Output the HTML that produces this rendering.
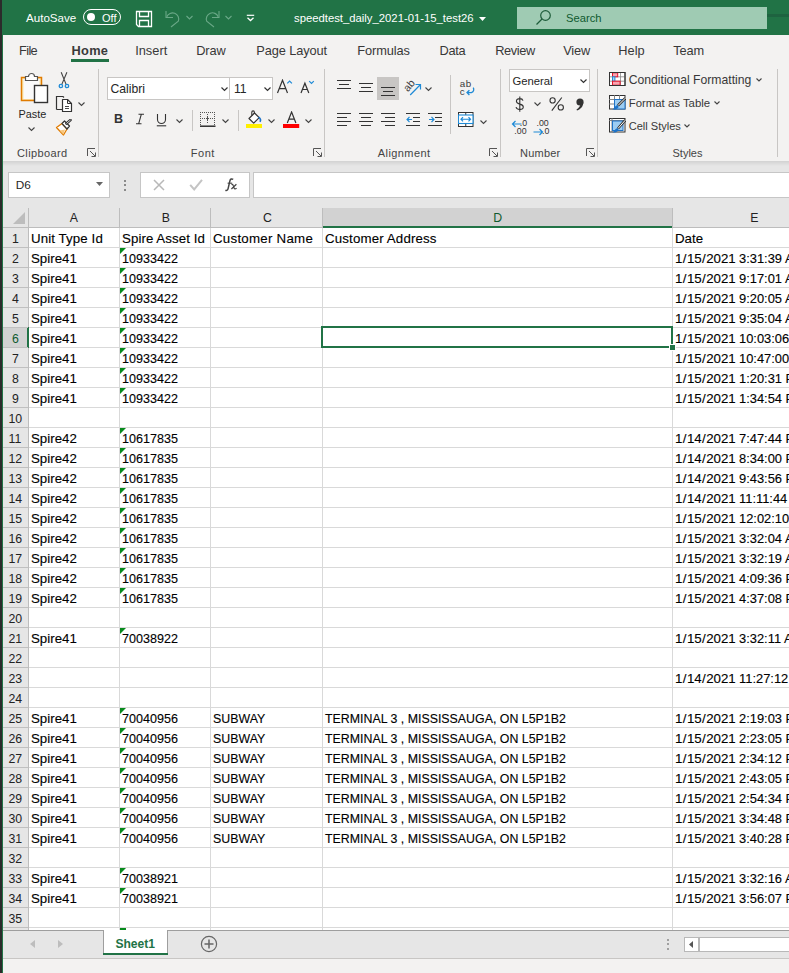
<!DOCTYPE html>
<html><head><meta charset="utf-8"><style>
html,body{margin:0;padding:0}
body{width:789px;height:973px;position:relative;overflow:hidden;background:#f3f2f1;font-family:"Liberation Sans",sans-serif}
body div,body svg{position:absolute}
.t{white-space:nowrap;line-height:1}
.n{display:inline-block;transform:scaleX(0.93);transform-origin:0 0}
.n2{display:inline-block;transform:scaleX(0.945);transform-origin:0 0}
.m{display:inline-block;transform:scaleX(0.97);transform-origin:0 0}
</style></head><body>

<div style="left:0px;top:0px;width:2px;height:973px;background:#2b2b2b"></div>
<div style="left:2px;top:0px;width:1px;height:973px;background:#217346"></div>
<div style="left:3px;top:0px;width:786px;height:35px;background:#217346"></div>
<div class="t" style="left:26px;top:12.18px;font-size:11.6px;color:#fff">AutoSave</div>
<div style="left:83px;top:9px;width:36px;height:14px;border:1px solid #fff;border-radius:8px"></div>
<div style="left:87px;top:13px;width:8px;height:8px;background:#fff;border-radius:50%"></div>
<div class="t" style="left:102px;top:12.69px;font-size:11px;color:#fff">Off</div>
<svg style="left:135px;top:10px" width="18" height="18" viewBox="0 0 18 18"><path d="M1.5 1.5h15v15h-13l-2-2z" fill="none" stroke="#fff" stroke-width="1.3"/><path d="M4.5 1.5v5h9v-5M4.5 16.5v-6h9v6" fill="none" stroke="#fff" stroke-width="1.3"/></svg>
<svg style="left:160px;top:5px" width="80" height="27" viewBox="0 0 80 27"><g fill="none" stroke="#6aa887" stroke-width="1.1"><path d="M6 6V12.5H13"/><path d="M6.8 11.8A6.1 6.1 0 1 1 18.3 16.2L11 22"/><path d="M59 6V12.5H52"/><path d="M58.2 11.8A6.1 6.1 0 1 0 46.7 16.2L54 22"/><path d="M26.5 11l3 3 3-3M65.5 11l3 3 3-3"/></g></svg>
<svg style="left:246px;top:14px" width="9" height="8" viewBox="0 0 9 8"><path d="M0.8 1.3h7.4" stroke="#fff" stroke-width="1.2"/><path d="M1.5 3.8l3 2.8 3-2.8" fill="none" stroke="#fff" stroke-width="1.3"/></svg>
<div class="t" style="left:294px;top:12.73px;font-size:11.3px;color:#fff">speedtest_daily_2021-01-15_test26</div>
<svg style="left:479px;top:17px" width="7" height="4" viewBox="0 0 7 4"><path d="M0 0h7L3.5 4z" fill="#fff"/></svg>
<div style="left:517px;top:7px;width:250px;height:22px;background:#9fcbb3"></div>
<svg style="left:535px;top:9px" width="17" height="17" viewBox="0 0 17 17"><circle cx="10.5" cy="6.5" r="4.8" fill="none" stroke="#1e5c3a" stroke-width="1.2"/><path d="M7 10L1.5 15.5" stroke="#1e5c3a" stroke-width="1.3"/></svg>
<div class="t" style="left:566px;top:12.52px;font-size:11.2px;color:#0f5a30">Search</div>
<div style="left:767px;top:13.5px;width:22px;height:3px;background:#1e6340"></div>
<div style="left:3px;top:35px;width:786px;height:126px;background:#f3f2f1"></div>
<div class="t" style="left:19.0px;top:44.56px;font-size:12.8px;color:#383838;letter-spacing:-0.64px">File</div>
<div class="t" style="left:71.5px;top:44.56px;font-size:12.8px;color:#3a3a3a;font-weight:bold;letter-spacing:0.3px">Home</div>
<div class="t" style="left:135.2px;top:44.56px;font-size:12.8px;color:#383838;letter-spacing:0px">Insert</div>
<div class="t" style="left:196.2px;top:44.56px;font-size:12.8px;color:#383838;letter-spacing:-0.07px">Draw</div>
<div class="t" style="left:256.2px;top:44.56px;font-size:12.8px;color:#383838;letter-spacing:-0.09px">Page Layout</div>
<div class="t" style="left:357.2px;top:44.56px;font-size:12.8px;color:#383838;letter-spacing:-0.08px">Formulas</div>
<div class="t" style="left:439.59999999999997px;top:44.56px;font-size:12.8px;color:#383838;letter-spacing:-0.35px">Data</div>
<div class="t" style="left:495.2px;top:44.56px;font-size:12.8px;color:#383838;letter-spacing:-0.4px">Review</div>
<div class="t" style="left:563.2px;top:44.56px;font-size:12.8px;color:#383838;letter-spacing:-0.18px">View</div>
<div class="t" style="left:618.2px;top:44.56px;font-size:12.8px;color:#383838;letter-spacing:0.06px">Help</div>
<div class="t" style="left:673.2px;top:44.56px;font-size:12.8px;color:#383838;letter-spacing:-0.1px">Team</div>
<div style="left:71px;top:59px;width:38px;height:3px;background:#217346"></div>
<div style="left:98px;top:69px;width:1px;height:88px;background:#c8c6c4"></div>
<div style="left:324px;top:69px;width:1px;height:88px;background:#c8c6c4"></div>
<div style="left:500px;top:69px;width:1px;height:88px;background:#c8c6c4"></div>
<div style="left:597px;top:69px;width:1px;height:88px;background:#c8c6c4"></div>
<div style="left:777px;top:69px;width:1px;height:88px;background:#c8c6c4"></div>
<div class="t" style="left:17.0px;top:147.69px;font-size:11px;color:#444;letter-spacing:0.39px">Clipboard</div>
<div class="t" style="left:190.7px;top:147.69px;font-size:11px;color:#444;letter-spacing:0.56px">Font</div>
<div class="t" style="left:377.8px;top:147.69px;font-size:11px;color:#444;letter-spacing:0.42px">Alignment</div>
<div class="t" style="left:520.1px;top:147.69px;font-size:11px;color:#444;letter-spacing:0.21px">Number</div>
<div class="t" style="left:672.5px;top:147.69px;font-size:11px;color:#444;letter-spacing:0.0px">Styles</div>
<svg style="left:87px;top:148px" width="9" height="9" viewBox="0 0 9 9"><path d="M0.5 8V0.5H8" fill="none" stroke="#555" stroke-width="1"/><path d="M3 3l5 5M4.5 8.5H8.5V4.5" fill="none" stroke="#555" stroke-width="1"/></svg>
<svg style="left:313px;top:148px" width="9" height="9" viewBox="0 0 9 9"><path d="M0.5 8V0.5H8" fill="none" stroke="#555" stroke-width="1"/><path d="M3 3l5 5M4.5 8.5H8.5V4.5" fill="none" stroke="#555" stroke-width="1"/></svg>
<svg style="left:489px;top:148px" width="9" height="9" viewBox="0 0 9 9"><path d="M0.5 8V0.5H8" fill="none" stroke="#555" stroke-width="1"/><path d="M3 3l5 5M4.5 8.5H8.5V4.5" fill="none" stroke="#555" stroke-width="1"/></svg>
<svg style="left:586px;top:148px" width="9" height="9" viewBox="0 0 9 9"><path d="M0.5 8V0.5H8" fill="none" stroke="#555" stroke-width="1"/><path d="M3 3l5 5M4.5 8.5H8.5V4.5" fill="none" stroke="#555" stroke-width="1"/></svg>
<svg style="left:18px;top:70px" width="34" height="36" viewBox="0 0 34 36">
<rect x="3.5" y="7.5" width="20" height="23" fill="#fde8b0" stroke="#e07b00" stroke-width="1.5"/>
<rect x="5.5" y="9" width="16" height="20" fill="#fafafa"/>
<path d="M7.5 10.5v-4h3a3 3 0 0 1 6 0h3v4z" fill="#fff" stroke="#555" stroke-width="1.2"/>
<rect x="16.5" y="15.5" width="13" height="17" fill="#fff" stroke="#333" stroke-width="1.4"/>
</svg>
<div class="t" style="left:18.5px;top:108.57px;font-size:10.9px;color:#262626">Paste</div>
<svg style="left:28px;top:127px" width="7" height="5" viewBox="0 0 7 5"><path d="M0.5 0.5l3 3 3-3" fill="none" stroke="#444" stroke-width="1.1"/></svg>
<svg style="left:57px;top:71px" width="14" height="18" viewBox="0 0 14 18"><path d="M4.2 1.3L9.2 13.6M9.9 1.3L4.7 13.6" stroke="#444" stroke-width="1.1" fill="none"/><circle cx="3.9" cy="15" r="1.7" fill="none" stroke="#1e8ad6" stroke-width="1.3"/><circle cx="10" cy="15" r="1.7" fill="none" stroke="#1e8ad6" stroke-width="1.3"/></svg>
<svg style="left:55px;top:95px" width="18" height="18" viewBox="0 0 18 18"><path d="M1.5 14.5V1.5H8L9 2.5M1.5 14.5H7" fill="none" stroke="#333" stroke-width="1.2"/><path d="M7.5 4.5H12.5L16.5 8.5V16.5H7.5Z" fill="#fff" stroke="#333" stroke-width="1.2" stroke-linejoin="round"/><path d="M12.5 4.5V8.5H16.5" fill="none" stroke="#333" stroke-width="1"/><path d="M10 11.5H14M10 13.5H14" stroke="#333" stroke-width="0.9"/></svg>
<svg style="left:78px;top:102px" width="7" height="5" viewBox="0 0 7 5"><path d="M0.5 0.5l3 3 3-3" fill="none" stroke="#444" stroke-width="1.1"/></svg>
<svg style="left:55px;top:119px" width="18" height="17" viewBox="0 0 18 17"><path d="M1.5 8.5L7 4.5 12 10 8.5 16Z" fill="#fff" stroke="#e07b00" stroke-width="1.3" stroke-linejoin="round"/><path d="M4.5 11.5L10 10.5 8.5 15.5Z" fill="#f8c880"/><path d="M7 4.5L9.5 2 14.5 7 12 10Z" fill="#fff" stroke="#333" stroke-width="1.2" stroke-linejoin="round"/><path d="M11.5 4.5L15.5 1" stroke="#333" stroke-width="2.6" stroke-linecap="round"/><path d="M11.8 4.2L15.3 1.2" stroke="#fff" stroke-width="0.8" stroke-linecap="round"/></svg>
<div style="left:107px;top:77px;width:123px;height:23px;background:#fff;border:1px solid #c8c6c4;box-sizing:border-box"></div>
<div style="left:229px;top:77px;width:44px;height:23px;background:#fff;border:1px solid #c8c6c4;box-sizing:border-box"></div>
<div class="t" style="left:110.5px;top:82.97px;font-size:12.2px;color:#262626">Calibri</div>
<div class="t" style="left:234px;top:82.97px;font-size:12.2px;color:#262626">11</div>
<svg style="left:221px;top:87px" width="7" height="5" viewBox="0 0 7 5"><path d="M0.5 0.5l3 3 3-3" fill="none" stroke="#333" stroke-width="1.2"/></svg>
<svg style="left:264px;top:87px" width="7" height="5" viewBox="0 0 7 5"><path d="M0.5 0.5l3 3 3-3" fill="none" stroke="#333" stroke-width="1.2"/></svg>
<svg style="left:276px;top:79px" width="40" height="15" viewBox="0 0 40 15"><path d="M1.5 14L6.5 1.2 11.5 14M3.3 9.6H9.7" fill="none" stroke="#333" stroke-width="1.2"/><path d="M11.3 4.4L13.6 2 15.9 4.4" fill="none" stroke="#1e8ad6" stroke-width="1.2"/><path d="M25 14L28.9 4.2 32.8 14M26.4 10.5H31.4" fill="none" stroke="#333" stroke-width="1.2"/><path d="M33.2 2.2L35.5 4.5 37.8 2.2" fill="none" stroke="#1e8ad6" stroke-width="1.2"/></svg>
<div class="t" style="left:114px;top:113.42px;font-size:12.5px;color:#333;font-weight:bold">B</div>
<svg style="left:135px;top:113px" width="10" height="12" viewBox="0 0 10 12"><path d="M3.5 1.3H9M1 10.7H6.5M6.3 1.3L3.7 10.7" fill="none" stroke="#333" stroke-width="1.1"/></svg>
<svg style="left:156px;top:113px" width="11" height="14" viewBox="0 0 11 14"><path d="M1.5 1V6.5A4 4 0 0 0 9.5 6.5V1" fill="none" stroke="#333" stroke-width="1.1"/><path d="M0.8 12.8H10.2" stroke="#333" stroke-width="1.1"/></svg>
<svg style="left:176px;top:119px" width="7" height="5" viewBox="0 0 7 5"><path d="M0.5 0.5l3 3 3-3" fill="none" stroke="#444" stroke-width="1.1"/></svg>
<svg style="left:222px;top:119px" width="7" height="5" viewBox="0 0 7 5"><path d="M0.5 0.5l3 3 3-3" fill="none" stroke="#444" stroke-width="1.1"/></svg>
<svg style="left:268px;top:119px" width="7" height="5" viewBox="0 0 7 5"><path d="M0.5 0.5l3 3 3-3" fill="none" stroke="#444" stroke-width="1.1"/></svg>
<svg style="left:305px;top:119px" width="7" height="5" viewBox="0 0 7 5"><path d="M0.5 0.5l3 3 3-3" fill="none" stroke="#444" stroke-width="1.1"/></svg>
<div style="left:192px;top:110px;width:1px;height:21px;background:#c8c6c4"></div>
<div style="left:238px;top:110px;width:1px;height:21px;background:#c8c6c4"></div>
<svg style="left:200px;top:112px" width="16" height="15" viewBox="0 0 16 15"><g fill="#555"><rect x="0" y="0" width="1" height="1"/><rect x="2" y="0" width="1" height="1"/><rect x="4" y="0" width="1" height="1"/><rect x="6" y="0" width="1" height="1"/><rect x="8" y="0" width="1" height="1"/><rect x="10" y="0" width="1" height="1"/><rect x="12" y="0" width="1" height="1"/><rect x="14" y="0" width="1" height="1"/><rect x="0" y="2" width="1" height="1"/><rect x="0" y="4" width="1" height="1"/><rect x="0" y="6" width="1" height="1"/><rect x="0" y="8" width="1" height="1"/><rect x="0" y="10" width="1" height="1"/><rect x="0" y="12" width="1" height="1"/><rect x="14" y="2" width="1" height="1"/><rect x="14" y="4" width="1" height="1"/><rect x="14" y="6" width="1" height="1"/><rect x="14" y="8" width="1" height="1"/><rect x="14" y="10" width="1" height="1"/><rect x="14" y="12" width="1" height="1"/><rect x="7" y="2" width="1" height="1"/><rect x="7" y="4" width="1" height="1"/><rect x="7" y="8" width="1" height="1"/><rect x="7" y="10" width="1" height="1"/><rect x="2" y="6" width="1" height="1"/><rect x="4" y="6" width="1" height="1"/><rect x="10" y="6" width="1" height="1"/><rect x="12" y="6" width="1" height="1"/><rect x="6" y="6" width="3" height="1"/><rect x="7" y="5" width="1" height="3"/></g><rect x="0" y="13.5" width="15.5" height="1.4" fill="#222"/></svg>
<svg style="left:245px;top:110px" width="18" height="19" viewBox="0 0 18 19"><path d="M4 8.5L9.5 3 14.2 7.7 8.7 13.2Z" fill="#fff" stroke="#333" stroke-width="1.2" stroke-linejoin="round"/><path d="M6.8 5.6L6.8 2.2A1.3 1.3 0 0 1 9.4 2.2L9.4 4" fill="none" stroke="#333" stroke-width="1.1"/><path d="M13.5 7.2C15.5 8.5 16 10.2 15 11.8" fill="none" stroke="#1e73c8" stroke-width="1.6"/><rect x="1" y="14" width="16" height="4" fill="#ffef00"/></svg>
<svg style="left:283px;top:111px" width="17" height="18" viewBox="0 0 17 18"><path d="M4.3 12L8.6 1 12.9 12M5.9 8.2H11.3" fill="none" stroke="#333" stroke-width="1.2"/><rect x="0" y="13" width="16.2" height="4" fill="#f00"/></svg>
<svg style="left:337px;top:80px" width="16" height="16" viewBox="0 0 16 16"><path d="M0 0.5H14" stroke="#333" stroke-width="1"/><path d="M2 4.5H12" stroke="#333" stroke-width="1"/><path d="M0 8.5H14" stroke="#333" stroke-width="1"/></svg>
<svg style="left:359px;top:83px" width="16" height="16" viewBox="0 0 16 16"><path d="M0 0.5H14" stroke="#333" stroke-width="1"/><path d="M2 4.5H12" stroke="#333" stroke-width="1"/><path d="M0 8.5H14" stroke="#333" stroke-width="1"/></svg>
<div style="left:377px;top:77px;width:22px;height:23px;background:#c8c6c4"></div>
<svg style="left:381px;top:87px" width="16" height="16" viewBox="0 0 16 16"><path d="M0 0.5H14" stroke="#333" stroke-width="1"/><path d="M2 4.5H12" stroke="#333" stroke-width="1"/><path d="M0 8.5H14" stroke="#333" stroke-width="1"/></svg>
<div class="t" style="left:403px;top:79.5px;font-size:10.5px;color:#3a3a3a;transform:rotate(-50deg);transform-origin:50% 50%">ab</div>
<svg style="left:409px;top:83px" width="14" height="13" viewBox="0 0 14 13"><path d="M1.2 12L11.5 1.5M6.5 1.5H11.5V6.5" fill="none" stroke="#1e8ad6" stroke-width="1.2"/></svg>
<svg style="left:425px;top:86.5px" width="7" height="5" viewBox="0 0 7 5"><path d="M0.5 0.5l3 3 3-3" fill="none" stroke="#444" stroke-width="1.1"/></svg>
<svg style="left:337px;top:113px" width="16" height="16" viewBox="0 0 16 16"><path d="M0 0.5H14" stroke="#333" stroke-width="1"/><path d="M0 4.5H10" stroke="#333" stroke-width="1"/><path d="M0 8.5H14" stroke="#333" stroke-width="1"/><path d="M0 12.5H10" stroke="#333" stroke-width="1"/></svg>
<svg style="left:359px;top:113px" width="16" height="16" viewBox="0 0 16 16"><path d="M0 0.5H14" stroke="#333" stroke-width="1"/><path d="M2 4.5H12" stroke="#333" stroke-width="1"/><path d="M0 8.5H14" stroke="#333" stroke-width="1"/><path d="M2 12.5H12" stroke="#333" stroke-width="1"/></svg>
<svg style="left:381px;top:113px" width="16" height="16" viewBox="0 0 16 16"><path d="M0 0.5H14" stroke="#333" stroke-width="1"/><path d="M4 4.5H14" stroke="#333" stroke-width="1"/><path d="M0 8.5H14" stroke="#333" stroke-width="1"/><path d="M4 12.5H14" stroke="#333" stroke-width="1"/></svg>
<svg style="left:406px;top:113px" width="16" height="16" viewBox="0 0 16 16"><path d="M0 0.5H14" stroke="#333" stroke-width="1"/><path d="M7 4.5H14" stroke="#333" stroke-width="1"/><path d="M7 8.5H14" stroke="#333" stroke-width="1"/><path d="M0 12.5H14" stroke="#333" stroke-width="1"/></svg>
<svg style="left:428px;top:113px" width="16" height="16" viewBox="0 0 16 16"><path d="M0 0.5H14" stroke="#333" stroke-width="1"/><path d="M7 4.5H14" stroke="#333" stroke-width="1"/><path d="M7 8.5H14" stroke="#333" stroke-width="1"/><path d="M0 12.5H14" stroke="#333" stroke-width="1"/></svg>
<svg style="left:406px;top:116px" width="7" height="7" viewBox="0 0 7 7"><path d="M6 3.5H1M3.5 1L1 3.5 3.5 6" fill="none" stroke="#1e8ad6" stroke-width="1.1"/></svg>
<svg style="left:428px;top:116px" width="7" height="7" viewBox="0 0 7 7"><path d="M1 3.5H6M3.5 1L6 3.5 3.5 6" fill="none" stroke="#1e8ad6" stroke-width="1.1"/></svg>
<div style="left:450px;top:75px;width:1px;height:59px;background:#c8c6c4"></div>
<div class="t" style="left:459.8px;top:79.2px;font-size:9.8px;color:#3a3a3a;letter-spacing:0.6px">ab</div>
<div class="t" style="left:459.8px;top:86.7px;font-size:9.8px;color:#3a3a3a">c</div>
<svg style="left:465px;top:86px" width="10" height="10" viewBox="0 0 10 10"><path d="M8.2 1.6C9.2 3.2 9 5.8 6.4 6.6H2M4.4 4.2L2 6.6 4.4 9" fill="none" stroke="#1e8ad6" stroke-width="1.3"/></svg>
<svg style="left:458px;top:112px" width="16" height="15" viewBox="0 0 16 15"><rect x="0.5" y="0.5" width="14.5" height="14" fill="#fff" stroke="#333" stroke-width="1"/><path d="M7.75 0.5V3M7.75 11.5V14.5" stroke="#333" stroke-width="1"/><rect x="0.5" y="3" width="14.5" height="8.5" fill="#fff" stroke="#1e8ad6" stroke-width="1.1"/><path d="M3 7.25H12.5M5 5.2L3 7.25 5 9.3M10.5 5.2L12.5 7.25 10.5 9.3" fill="none" stroke="#1e8ad6" stroke-width="1.2"/></svg>
<svg style="left:480px;top:120px" width="7" height="5" viewBox="0 0 7 5"><path d="M0.5 0.5l3 3 3-3" fill="none" stroke="#444" stroke-width="1.1"/></svg>
<div style="left:509px;top:69px;width:81px;height:23px;background:#fff;border:1px solid #c8c6c4;box-sizing:border-box"></div>
<div class="t" style="left:512.4px;top:76.23px;font-size:11.3px;color:#262626">General</div>
<svg style="left:580px;top:79px" width="7" height="5" viewBox="0 0 7 5"><path d="M0.5 0.5l3 3 3-3" fill="none" stroke="#333" stroke-width="1.2"/></svg>
<svg style="left:515px;top:96px" width="10" height="16" viewBox="0 0 10 16"><path d="M8 4.6C7.6 3.2 6.4 2.6 4.8 2.6 2.8 2.6 1.4 3.6 1.4 5.2 1.4 7 3 7.6 4.8 8.1 6.8 8.6 8.3 9.3 8.3 11.1 8.3 12.8 6.8 13.6 4.8 13.6 2.8 13.6 1.5 12.8 1 11.2M4.8 0.5V15.8" fill="none" stroke="#333" stroke-width="1.1"/></svg>
<svg style="left:534px;top:102px" width="7" height="5" viewBox="0 0 7 5"><path d="M0.5 0.5l3 3 3-3" fill="none" stroke="#444" stroke-width="1.1"/></svg>
<svg style="left:549px;top:97px" width="16" height="14" viewBox="0 0 16 14"><circle cx="3.6" cy="3.4" r="2.6" fill="none" stroke="#333" stroke-width="1.1"/><circle cx="11.8" cy="10.4" r="2.6" fill="none" stroke="#333" stroke-width="1.1"/><path d="M12.8 0.5L2.8 13.6" stroke="#333" stroke-width="1.1"/></svg>
<svg style="left:575px;top:98px" width="9" height="13" viewBox="0 0 9 13"><circle cx="5" cy="4" r="3.6" fill="#333"/><path d="M8.2 4.5C8.2 8.5 6 11 2 12.5L1.5 11.5C4 10 5.5 8 5.5 5z" fill="#333"/></svg>
<div class="t" style="left:519.8px;top:119.15px;font-size:8.8px;color:#333">.0</div>
<div class="t" style="left:514.3px;top:127.25px;font-size:8.8px;color:#333">.00</div>
<svg style="left:511px;top:120px" width="11" height="8" viewBox="0 0 11 8"><path d="M10.5 4H1.5M4.5 1L1.5 4 4.5 7" fill="none" stroke="#1e8ad6" stroke-width="1.2"/></svg>
<div class="t" style="left:536.5px;top:119.15px;font-size:8.8px;color:#333">.00</div>
<div class="t" style="left:542px;top:127.25px;font-size:8.8px;color:#333">.0</div>
<svg style="left:533px;top:128px" width="11" height="8" viewBox="0 0 11 8"><path d="M0.5 4H9.5M6.5 1L9.5 4 6.5 7" fill="none" stroke="#1e8ad6" stroke-width="1.2"/></svg>
<svg style="left:609px;top:72px" width="17" height="14" viewBox="0 0 17 14"><rect x="0.5" y="0.5" width="15.5" height="13" fill="#fff" stroke="#333"/><path d="M3.5 0V14M11.5 0V14M0 4.8H16M0 9.2H16" stroke="#888" stroke-width="0.8"/><rect x="3.5" y="0.8" width="5.2" height="4" fill="#f8a5b0" stroke="#e3132c" stroke-width="1"/><rect x="3.5" y="4.8" width="2.4" height="4.4" fill="#a9d6f5" stroke="#1e8ad6" stroke-width="1"/><rect x="3.5" y="9.2" width="7.6" height="4" fill="#f8a5b0" stroke="#e3132c" stroke-width="1"/><rect x="0.5" y="0.5" width="15.5" height="13" fill="none" stroke="#333"/></svg>
<div class="t" style="left:628.7px;top:74.27px;font-size:12.2px;color:#383838">Conditional Formatting</div>
<svg style="left:609px;top:95px" width="17" height="15" viewBox="0 0 17 15"><rect x="0.5" y="0.5" width="15.5" height="13.5" fill="#fff" stroke="#333"/><path d="M5.5 0V14M10.5 0V14M0 4.5H16M0 9H16" stroke="#777" stroke-width="0.9"/><rect x="5.5" y="4.5" width="10.5" height="9.5" fill="#9ccdf3" stroke="#1e73c8" stroke-width="1"/><path d="M16.3 3.2L9 10.5" stroke="#333" stroke-width="2.6"/><path d="M16.3 3.2L9 10.5" stroke="#fff" stroke-width="1"/><path d="M8.8 10C7.5 10 6.5 11 5.8 12.2 5.2 13.3 4.2 14 3.2 14.3 5.5 14.8 8.2 14.2 9.6 12.2z" fill="#1e73c8"/></svg>
<div class="t" style="left:628.7px;top:97.55px;font-size:11.4px;color:#383838">Format as Table</div>
<svg style="left:609px;top:118px" width="17" height="15" viewBox="0 0 17 15"><rect x="0.5" y="0.5" width="15.5" height="13.5" fill="#fff" stroke="#333"/><path d="M3 0V14M0 2.5H16" stroke="#777" stroke-width="0.9"/><rect x="3.5" y="3" width="10.5" height="9.5" fill="#9ccdf3" stroke="#1e73c8" stroke-width="1"/><path d="M16.3 2.2L9 10.5" stroke="#333" stroke-width="2.6"/><path d="M16.3 2.2L9 10.5" stroke="#fff" stroke-width="1"/><path d="M8.8 10C7.5 10 6.5 11 5.8 12.2 5.2 13.3 4.2 14 3.2 14.3 5.5 14.8 8.2 14.2 9.6 12.2z" fill="#1e73c8"/></svg>
<div class="t" style="left:628.7px;top:120.65px;font-size:11.05px;color:#383838">Cell Styles</div>
<svg style="left:756px;top:78px" width="6" height="4" viewBox="0 0 6 4"><path d="M0.5 0.5l2.5 2.5 2.5-2.5" fill="none" stroke="#444" stroke-width="1.1"/></svg>
<svg style="left:714px;top:101px" width="6" height="4" viewBox="0 0 6 4"><path d="M0.5 0.5l2.5 2.5 2.5-2.5" fill="none" stroke="#444" stroke-width="1.1"/></svg>
<svg style="left:684px;top:124px" width="6" height="4" viewBox="0 0 6 4"><path d="M0.5 0.5l2.5 2.5 2.5-2.5" fill="none" stroke="#444" stroke-width="1.1"/></svg>
<div style="left:3px;top:161px;width:786px;height:47px;background:#e6e6e6"></div>
<div style="left:3px;top:161px;width:786px;height:5px;background:linear-gradient(#d2d2d2,#e6e6e6)"></div>
<div style="left:8px;top:172px;width:102px;height:26px;background:#fff;border:1px solid #c6c6c6;box-sizing:border-box"></div>
<div class="t" style="left:15.7px;top:179.81px;font-size:11.8px;color:#262626">D6</div>
<svg style="left:96px;top:182px" width="7" height="4" viewBox="0 0 7 4"><path d="M0 0h7L3.5 4z" fill="#666"/></svg>
<div style="left:124px;top:179.5px;width:2px;height:2px;background:#8a8a8a"></div>
<div style="left:124px;top:184px;width:2px;height:2px;background:#8a8a8a"></div>
<div style="left:124px;top:188.5px;width:2px;height:2px;background:#8a8a8a"></div>
<div style="left:140px;top:172px;width:110px;height:26px;background:#fff;border:1px solid #c6c6c6;box-sizing:border-box"></div>
<svg style="left:153px;top:179px" width="12" height="12" viewBox="0 0 12 12"><path d="M1 1l10 10M11 1L1 11" stroke="#b8b8b8" stroke-width="1.5"/></svg>
<svg style="left:189px;top:179px" width="14" height="12" viewBox="0 0 14 12"><path d="M1.2 5.8l4 4.6 7.8-9.6" fill="none" stroke="#c4c4c4" stroke-width="2"/></svg>
<svg style="left:224px;top:178px" width="15" height="14" viewBox="0 0 15 14"><path d="M9.2 1.4C7.8 0.4 6.3 1 5.9 2.8L4.1 10.6C3.7 12.2 2.8 12.8 1.4 12.2" fill="none" stroke="#444" stroke-width="1.5"/><path d="M3.6 5.2H8.2" stroke="#444" stroke-width="1.1"/><path d="M7.4 6.4C8.4 6 8.9 6.6 9.3 7.8L10.2 10.2C10.5 11 11.3 11.2 12.6 10.2M12.4 6.3L7.4 11" fill="none" stroke="#444" stroke-width="1.2"/></svg>
<div style="left:253px;top:172px;width:536px;height:26px;background:#fff;border:1px solid #c6c6c6;border-right:none;box-sizing:border-box"></div>
<div style="left:3px;top:208px;width:786px;height:722px;background:#fff"></div>
<div style="left:3px;top:208px;width:786px;height:19px;background:#e6e6e6"></div>
<div style="left:323px;top:208px;width:349px;height:19px;background:#d2d2d2"></div>
<div style="left:3px;top:228px;width:25px;height:702px;background:#e6e6e6"></div>
<div style="left:3px;top:227px;width:786px;height:1px;background:#bdbdbd"></div>
<div style="left:323px;top:226px;width:349px;height:2px;background:#217346"></div>
<div style="left:28px;top:208px;width:1px;height:722px;background:#bdbdbd"></div>
<svg style="left:13px;top:212px" width="12" height="12" viewBox="0 0 12 12"><path d="M12 0V12H0z" fill="#bdbdbd"/></svg>
<div style="left:119px;top:208px;width:1px;height:19px;background:#bdbdbd"></div>
<div style="left:119px;top:228px;width:1px;height:702px;background:#d9d9d9"></div>
<div class="t" style="left:69.8px;top:211.59px;font-size:12.3px;color:#222">A</div>
<div style="left:210px;top:208px;width:1px;height:19px;background:#bdbdbd"></div>
<div style="left:210px;top:228px;width:1px;height:702px;background:#d9d9d9"></div>
<div class="t" style="left:161.8px;top:211.59px;font-size:12.3px;color:#222">B</div>
<div style="left:322px;top:208px;width:1px;height:19px;background:#bdbdbd"></div>
<div style="left:322px;top:228px;width:1px;height:702px;background:#d9d9d9"></div>
<div class="t" style="left:263px;top:211.59px;font-size:12.3px;color:#222">C</div>
<div style="left:672px;top:208px;width:1px;height:19px;background:#bdbdbd"></div>
<div style="left:672px;top:228px;width:1px;height:702px;background:#d9d9d9"></div>
<div class="t" style="left:493.3px;top:211.59px;font-size:12.3px;color:#0e5a2e">D</div>
<div class="t" style="left:750.3px;top:211.59px;font-size:12.3px;color:#222">E</div>
<div style="left:3px;top:328px;width:25px;height:19px;background:#d2d2d2"></div>
<div style="left:27px;top:327px;width:2px;height:21px;background:#217346"></div>
<div style="left:29px;top:247px;width:760px;height:1px;background:#d9d9d9"></div>
<div style="left:3px;top:247px;width:25px;height:1px;background:#c0c0c0"></div>
<div class="t" style="left:12.1px;top:232.59px;font-size:12.3px;color:#222">1</div>
<div style="left:29px;top:267px;width:760px;height:1px;background:#d9d9d9"></div>
<div style="left:3px;top:267px;width:25px;height:1px;background:#c0c0c0"></div>
<div class="t" style="left:12.1px;top:252.59px;font-size:12.3px;color:#222">2</div>
<div style="left:29px;top:287px;width:760px;height:1px;background:#d9d9d9"></div>
<div style="left:3px;top:287px;width:25px;height:1px;background:#c0c0c0"></div>
<div class="t" style="left:12.1px;top:272.59px;font-size:12.3px;color:#222">3</div>
<div style="left:29px;top:307px;width:760px;height:1px;background:#d9d9d9"></div>
<div style="left:3px;top:307px;width:25px;height:1px;background:#c0c0c0"></div>
<div class="t" style="left:12.1px;top:292.59px;font-size:12.3px;color:#222">4</div>
<div style="left:29px;top:327px;width:760px;height:1px;background:#d9d9d9"></div>
<div style="left:3px;top:327px;width:25px;height:1px;background:#c0c0c0"></div>
<div class="t" style="left:12.1px;top:312.59px;font-size:12.3px;color:#222">5</div>
<div style="left:29px;top:347px;width:760px;height:1px;background:#d9d9d9"></div>
<div style="left:3px;top:347px;width:25px;height:1px;background:#c0c0c0"></div>
<div class="t" style="left:12.1px;top:332.59px;font-size:12.3px;color:#0e5a2e">6</div>
<div style="left:29px;top:367px;width:760px;height:1px;background:#d9d9d9"></div>
<div style="left:3px;top:367px;width:25px;height:1px;background:#c0c0c0"></div>
<div class="t" style="left:12.1px;top:352.59px;font-size:12.3px;color:#222">7</div>
<div style="left:29px;top:387px;width:760px;height:1px;background:#d9d9d9"></div>
<div style="left:3px;top:387px;width:25px;height:1px;background:#c0c0c0"></div>
<div class="t" style="left:12.1px;top:372.59px;font-size:12.3px;color:#222">8</div>
<div style="left:29px;top:407px;width:760px;height:1px;background:#d9d9d9"></div>
<div style="left:3px;top:407px;width:25px;height:1px;background:#c0c0c0"></div>
<div class="t" style="left:12.1px;top:392.59px;font-size:12.3px;color:#222">9</div>
<div style="left:29px;top:427px;width:760px;height:1px;background:#d9d9d9"></div>
<div style="left:3px;top:427px;width:25px;height:1px;background:#c0c0c0"></div>
<div class="t" style="left:8.5px;top:412.59px;font-size:12.3px;color:#222">10</div>
<div style="left:29px;top:447px;width:760px;height:1px;background:#d9d9d9"></div>
<div style="left:3px;top:447px;width:25px;height:1px;background:#c0c0c0"></div>
<div class="t" style="left:8.5px;top:432.59px;font-size:12.3px;color:#222">11</div>
<div style="left:29px;top:467px;width:760px;height:1px;background:#d9d9d9"></div>
<div style="left:3px;top:467px;width:25px;height:1px;background:#c0c0c0"></div>
<div class="t" style="left:8.5px;top:452.59px;font-size:12.3px;color:#222">12</div>
<div style="left:29px;top:487px;width:760px;height:1px;background:#d9d9d9"></div>
<div style="left:3px;top:487px;width:25px;height:1px;background:#c0c0c0"></div>
<div class="t" style="left:8.5px;top:472.59px;font-size:12.3px;color:#222">13</div>
<div style="left:29px;top:507px;width:760px;height:1px;background:#d9d9d9"></div>
<div style="left:3px;top:507px;width:25px;height:1px;background:#c0c0c0"></div>
<div class="t" style="left:8.5px;top:492.59px;font-size:12.3px;color:#222">14</div>
<div style="left:29px;top:527px;width:760px;height:1px;background:#d9d9d9"></div>
<div style="left:3px;top:527px;width:25px;height:1px;background:#c0c0c0"></div>
<div class="t" style="left:8.5px;top:512.59px;font-size:12.3px;color:#222">15</div>
<div style="left:29px;top:547px;width:760px;height:1px;background:#d9d9d9"></div>
<div style="left:3px;top:547px;width:25px;height:1px;background:#c0c0c0"></div>
<div class="t" style="left:8.5px;top:532.59px;font-size:12.3px;color:#222">16</div>
<div style="left:29px;top:567px;width:760px;height:1px;background:#d9d9d9"></div>
<div style="left:3px;top:567px;width:25px;height:1px;background:#c0c0c0"></div>
<div class="t" style="left:8.5px;top:552.59px;font-size:12.3px;color:#222">17</div>
<div style="left:29px;top:587px;width:760px;height:1px;background:#d9d9d9"></div>
<div style="left:3px;top:587px;width:25px;height:1px;background:#c0c0c0"></div>
<div class="t" style="left:8.5px;top:572.59px;font-size:12.3px;color:#222">18</div>
<div style="left:29px;top:607px;width:760px;height:1px;background:#d9d9d9"></div>
<div style="left:3px;top:607px;width:25px;height:1px;background:#c0c0c0"></div>
<div class="t" style="left:8.5px;top:592.59px;font-size:12.3px;color:#222">19</div>
<div style="left:29px;top:627px;width:760px;height:1px;background:#d9d9d9"></div>
<div style="left:3px;top:627px;width:25px;height:1px;background:#c0c0c0"></div>
<div class="t" style="left:8.5px;top:612.59px;font-size:12.3px;color:#222">20</div>
<div style="left:29px;top:647px;width:760px;height:1px;background:#d9d9d9"></div>
<div style="left:3px;top:647px;width:25px;height:1px;background:#c0c0c0"></div>
<div class="t" style="left:8.5px;top:632.59px;font-size:12.3px;color:#222">21</div>
<div style="left:29px;top:667px;width:760px;height:1px;background:#d9d9d9"></div>
<div style="left:3px;top:667px;width:25px;height:1px;background:#c0c0c0"></div>
<div class="t" style="left:8.5px;top:652.59px;font-size:12.3px;color:#222">22</div>
<div style="left:29px;top:687px;width:760px;height:1px;background:#d9d9d9"></div>
<div style="left:3px;top:687px;width:25px;height:1px;background:#c0c0c0"></div>
<div class="t" style="left:8.5px;top:672.59px;font-size:12.3px;color:#222">23</div>
<div style="left:29px;top:707px;width:760px;height:1px;background:#d9d9d9"></div>
<div style="left:3px;top:707px;width:25px;height:1px;background:#c0c0c0"></div>
<div class="t" style="left:8.5px;top:692.59px;font-size:12.3px;color:#222">24</div>
<div style="left:29px;top:727px;width:760px;height:1px;background:#d9d9d9"></div>
<div style="left:3px;top:727px;width:25px;height:1px;background:#c0c0c0"></div>
<div class="t" style="left:8.5px;top:712.59px;font-size:12.3px;color:#222">25</div>
<div style="left:29px;top:747px;width:760px;height:1px;background:#d9d9d9"></div>
<div style="left:3px;top:747px;width:25px;height:1px;background:#c0c0c0"></div>
<div class="t" style="left:8.5px;top:732.59px;font-size:12.3px;color:#222">26</div>
<div style="left:29px;top:767px;width:760px;height:1px;background:#d9d9d9"></div>
<div style="left:3px;top:767px;width:25px;height:1px;background:#c0c0c0"></div>
<div class="t" style="left:8.5px;top:752.59px;font-size:12.3px;color:#222">27</div>
<div style="left:29px;top:787px;width:760px;height:1px;background:#d9d9d9"></div>
<div style="left:3px;top:787px;width:25px;height:1px;background:#c0c0c0"></div>
<div class="t" style="left:8.5px;top:772.59px;font-size:12.3px;color:#222">28</div>
<div style="left:29px;top:807px;width:760px;height:1px;background:#d9d9d9"></div>
<div style="left:3px;top:807px;width:25px;height:1px;background:#c0c0c0"></div>
<div class="t" style="left:8.5px;top:792.59px;font-size:12.3px;color:#222">29</div>
<div style="left:29px;top:827px;width:760px;height:1px;background:#d9d9d9"></div>
<div style="left:3px;top:827px;width:25px;height:1px;background:#c0c0c0"></div>
<div class="t" style="left:8.5px;top:812.59px;font-size:12.3px;color:#222">30</div>
<div style="left:29px;top:847px;width:760px;height:1px;background:#d9d9d9"></div>
<div style="left:3px;top:847px;width:25px;height:1px;background:#c0c0c0"></div>
<div class="t" style="left:8.5px;top:832.59px;font-size:12.3px;color:#222">31</div>
<div style="left:29px;top:867px;width:760px;height:1px;background:#d9d9d9"></div>
<div style="left:3px;top:867px;width:25px;height:1px;background:#c0c0c0"></div>
<div class="t" style="left:8.5px;top:852.59px;font-size:12.3px;color:#222">32</div>
<div style="left:29px;top:887px;width:760px;height:1px;background:#d9d9d9"></div>
<div style="left:3px;top:887px;width:25px;height:1px;background:#c0c0c0"></div>
<div class="t" style="left:8.5px;top:872.59px;font-size:12.3px;color:#222">33</div>
<div style="left:29px;top:907px;width:760px;height:1px;background:#d9d9d9"></div>
<div style="left:3px;top:907px;width:25px;height:1px;background:#c0c0c0"></div>
<div class="t" style="left:8.5px;top:892.59px;font-size:12.3px;color:#222">34</div>
<div style="left:29px;top:927px;width:760px;height:1px;background:#d9d9d9"></div>
<div style="left:3px;top:927px;width:25px;height:1px;background:#c0c0c0"></div>
<div class="t" style="left:8.5px;top:912.59px;font-size:12.3px;color:#222">35</div>
<div style="left:321px;top:326px;width:352px;height:22px;border:2px solid #217346;box-sizing:border-box"></div>
<div style="left:670px;top:345px;width:5px;height:5px;background:#217346;border:1px solid #fff;box-sizing:content-box;margin:-1px"></div>
<div class="t" style="left:31px;top:231.74px;font-size:13.3px;color:#000;-webkit-text-stroke:0.12px #000;letter-spacing:0.1px">Unit Type Id</div>
<div class="t" style="left:122px;top:231.74px;font-size:13.3px;color:#000;-webkit-text-stroke:0.12px #000;letter-spacing:0.06px">Spire Asset Id</div>
<div class="t" style="left:213px;top:231.74px;font-size:13.3px;color:#000;-webkit-text-stroke:0.12px #000;letter-spacing:0.25px">Customer Name</div>
<div class="t" style="left:325px;top:231.74px;font-size:13.3px;color:#000;-webkit-text-stroke:0.12px #000;letter-spacing:0.14px">Customer Address</div>
<div class="t" style="left:675px;top:231.74px;font-size:13.3px;color:#000;-webkit-text-stroke:0.12px #000;letter-spacing:0px">Date</div>
<div class="t" style="left:31px;top:251.74px;font-size:13.3px;color:#000;-webkit-text-stroke:0.12px #000;letter-spacing:0px">Spire41</div>
<div class="t" style="left:122px;top:251.74px;font-size:13.3px;color:#000;-webkit-text-stroke:0.12px #000"><span class="n2">10933422</span></div>
<div class="t" style="left:675px;top:251.74px;font-size:13.3px;color:#000;-webkit-text-stroke:0.12px #000">1<span style="padding:0 0.4px">/</span>15<span style="padding:0 0.4px">/</span>2021</div>
<div class="t" style="left:738.5px;top:251.74px;font-size:13.3px;color:#000;-webkit-text-stroke:0.12px #000"><span class="m">3:31:39 AM</span></div>
<svg style="left:120px;top:248px" width="6" height="6" viewBox="0 0 6 6"><path d="M0 0h6L0 6z" fill="#078a1c"/></svg>
<div class="t" style="left:31px;top:271.74px;font-size:13.3px;color:#000;-webkit-text-stroke:0.12px #000;letter-spacing:0px">Spire41</div>
<div class="t" style="left:122px;top:271.74px;font-size:13.3px;color:#000;-webkit-text-stroke:0.12px #000"><span class="n2">10933422</span></div>
<div class="t" style="left:675px;top:271.74px;font-size:13.3px;color:#000;-webkit-text-stroke:0.12px #000">1<span style="padding:0 0.4px">/</span>15<span style="padding:0 0.4px">/</span>2021</div>
<div class="t" style="left:738.5px;top:271.74px;font-size:13.3px;color:#000;-webkit-text-stroke:0.12px #000"><span class="m">9:17:01 AM</span></div>
<svg style="left:120px;top:268px" width="6" height="6" viewBox="0 0 6 6"><path d="M0 0h6L0 6z" fill="#078a1c"/></svg>
<div class="t" style="left:31px;top:291.74px;font-size:13.3px;color:#000;-webkit-text-stroke:0.12px #000;letter-spacing:0px">Spire41</div>
<div class="t" style="left:122px;top:291.74px;font-size:13.3px;color:#000;-webkit-text-stroke:0.12px #000"><span class="n2">10933422</span></div>
<div class="t" style="left:675px;top:291.74px;font-size:13.3px;color:#000;-webkit-text-stroke:0.12px #000">1<span style="padding:0 0.4px">/</span>15<span style="padding:0 0.4px">/</span>2021</div>
<div class="t" style="left:738.5px;top:291.74px;font-size:13.3px;color:#000;-webkit-text-stroke:0.12px #000"><span class="m">9:20:05 AM</span></div>
<svg style="left:120px;top:288px" width="6" height="6" viewBox="0 0 6 6"><path d="M0 0h6L0 6z" fill="#078a1c"/></svg>
<div class="t" style="left:31px;top:311.74px;font-size:13.3px;color:#000;-webkit-text-stroke:0.12px #000;letter-spacing:0px">Spire41</div>
<div class="t" style="left:122px;top:311.74px;font-size:13.3px;color:#000;-webkit-text-stroke:0.12px #000"><span class="n2">10933422</span></div>
<div class="t" style="left:675px;top:311.74px;font-size:13.3px;color:#000;-webkit-text-stroke:0.12px #000">1<span style="padding:0 0.4px">/</span>15<span style="padding:0 0.4px">/</span>2021</div>
<div class="t" style="left:738.5px;top:311.74px;font-size:13.3px;color:#000;-webkit-text-stroke:0.12px #000"><span class="m">9:35:04 AM</span></div>
<svg style="left:120px;top:308px" width="6" height="6" viewBox="0 0 6 6"><path d="M0 0h6L0 6z" fill="#078a1c"/></svg>
<div class="t" style="left:31px;top:331.74px;font-size:13.3px;color:#000;-webkit-text-stroke:0.12px #000;letter-spacing:0px">Spire41</div>
<div class="t" style="left:122px;top:331.74px;font-size:13.3px;color:#000;-webkit-text-stroke:0.12px #000"><span class="n2">10933422</span></div>
<div class="t" style="left:675px;top:331.74px;font-size:13.3px;color:#000;-webkit-text-stroke:0.12px #000">1<span style="padding:0 0.4px">/</span>15<span style="padding:0 0.4px">/</span>2021</div>
<div class="t" style="left:738.5px;top:331.74px;font-size:13.3px;color:#000;-webkit-text-stroke:0.12px #000"><span class="m">10:03:06 AM</span></div>
<svg style="left:120px;top:328px" width="6" height="6" viewBox="0 0 6 6"><path d="M0 0h6L0 6z" fill="#078a1c"/></svg>
<div class="t" style="left:31px;top:351.74px;font-size:13.3px;color:#000;-webkit-text-stroke:0.12px #000;letter-spacing:0px">Spire41</div>
<div class="t" style="left:122px;top:351.74px;font-size:13.3px;color:#000;-webkit-text-stroke:0.12px #000"><span class="n2">10933422</span></div>
<div class="t" style="left:675px;top:351.74px;font-size:13.3px;color:#000;-webkit-text-stroke:0.12px #000">1<span style="padding:0 0.4px">/</span>15<span style="padding:0 0.4px">/</span>2021</div>
<div class="t" style="left:738.5px;top:351.74px;font-size:13.3px;color:#000;-webkit-text-stroke:0.12px #000"><span class="m">10:47:00 AM</span></div>
<svg style="left:120px;top:348px" width="6" height="6" viewBox="0 0 6 6"><path d="M0 0h6L0 6z" fill="#078a1c"/></svg>
<div class="t" style="left:31px;top:371.74px;font-size:13.3px;color:#000;-webkit-text-stroke:0.12px #000;letter-spacing:0px">Spire41</div>
<div class="t" style="left:122px;top:371.74px;font-size:13.3px;color:#000;-webkit-text-stroke:0.12px #000"><span class="n2">10933422</span></div>
<div class="t" style="left:675px;top:371.74px;font-size:13.3px;color:#000;-webkit-text-stroke:0.12px #000">1<span style="padding:0 0.4px">/</span>15<span style="padding:0 0.4px">/</span>2021</div>
<div class="t" style="left:738.5px;top:371.74px;font-size:13.3px;color:#000;-webkit-text-stroke:0.12px #000"><span class="m">1:20:31 PM</span></div>
<svg style="left:120px;top:368px" width="6" height="6" viewBox="0 0 6 6"><path d="M0 0h6L0 6z" fill="#078a1c"/></svg>
<div class="t" style="left:31px;top:391.74px;font-size:13.3px;color:#000;-webkit-text-stroke:0.12px #000;letter-spacing:0px">Spire41</div>
<div class="t" style="left:122px;top:391.74px;font-size:13.3px;color:#000;-webkit-text-stroke:0.12px #000"><span class="n2">10933422</span></div>
<div class="t" style="left:675px;top:391.74px;font-size:13.3px;color:#000;-webkit-text-stroke:0.12px #000">1<span style="padding:0 0.4px">/</span>15<span style="padding:0 0.4px">/</span>2021</div>
<div class="t" style="left:738.5px;top:391.74px;font-size:13.3px;color:#000;-webkit-text-stroke:0.12px #000"><span class="m">1:34:54 PM</span></div>
<svg style="left:120px;top:388px" width="6" height="6" viewBox="0 0 6 6"><path d="M0 0h6L0 6z" fill="#078a1c"/></svg>
<div class="t" style="left:31px;top:431.74px;font-size:13.3px;color:#000;-webkit-text-stroke:0.12px #000;letter-spacing:0px">Spire42</div>
<div class="t" style="left:122px;top:431.74px;font-size:13.3px;color:#000;-webkit-text-stroke:0.12px #000"><span class="n2">10617835</span></div>
<div class="t" style="left:675px;top:431.74px;font-size:13.3px;color:#000;-webkit-text-stroke:0.12px #000">1<span style="padding:0 0.4px">/</span>14<span style="padding:0 0.4px">/</span>2021</div>
<div class="t" style="left:738.5px;top:431.74px;font-size:13.3px;color:#000;-webkit-text-stroke:0.12px #000"><span class="m">7:47:44 PM</span></div>
<svg style="left:120px;top:428px" width="6" height="6" viewBox="0 0 6 6"><path d="M0 0h6L0 6z" fill="#078a1c"/></svg>
<div class="t" style="left:31px;top:451.74px;font-size:13.3px;color:#000;-webkit-text-stroke:0.12px #000;letter-spacing:0px">Spire42</div>
<div class="t" style="left:122px;top:451.74px;font-size:13.3px;color:#000;-webkit-text-stroke:0.12px #000"><span class="n2">10617835</span></div>
<div class="t" style="left:675px;top:451.74px;font-size:13.3px;color:#000;-webkit-text-stroke:0.12px #000">1<span style="padding:0 0.4px">/</span>14<span style="padding:0 0.4px">/</span>2021</div>
<div class="t" style="left:738.5px;top:451.74px;font-size:13.3px;color:#000;-webkit-text-stroke:0.12px #000"><span class="m">8:34:00 PM</span></div>
<svg style="left:120px;top:448px" width="6" height="6" viewBox="0 0 6 6"><path d="M0 0h6L0 6z" fill="#078a1c"/></svg>
<div class="t" style="left:31px;top:471.74px;font-size:13.3px;color:#000;-webkit-text-stroke:0.12px #000;letter-spacing:0px">Spire42</div>
<div class="t" style="left:122px;top:471.74px;font-size:13.3px;color:#000;-webkit-text-stroke:0.12px #000"><span class="n2">10617835</span></div>
<div class="t" style="left:675px;top:471.74px;font-size:13.3px;color:#000;-webkit-text-stroke:0.12px #000">1<span style="padding:0 0.4px">/</span>14<span style="padding:0 0.4px">/</span>2021</div>
<div class="t" style="left:738.5px;top:471.74px;font-size:13.3px;color:#000;-webkit-text-stroke:0.12px #000"><span class="m">9:43:56 PM</span></div>
<svg style="left:120px;top:468px" width="6" height="6" viewBox="0 0 6 6"><path d="M0 0h6L0 6z" fill="#078a1c"/></svg>
<div class="t" style="left:31px;top:491.74px;font-size:13.3px;color:#000;-webkit-text-stroke:0.12px #000;letter-spacing:0px">Spire42</div>
<div class="t" style="left:122px;top:491.74px;font-size:13.3px;color:#000;-webkit-text-stroke:0.12px #000"><span class="n2">10617835</span></div>
<div class="t" style="left:675px;top:491.74px;font-size:13.3px;color:#000;-webkit-text-stroke:0.12px #000">1<span style="padding:0 0.4px">/</span>14<span style="padding:0 0.4px">/</span>2021</div>
<div class="t" style="left:738.5px;top:491.74px;font-size:13.3px;color:#000;-webkit-text-stroke:0.12px #000"><span class="m">11:11:44 PM</span></div>
<svg style="left:120px;top:488px" width="6" height="6" viewBox="0 0 6 6"><path d="M0 0h6L0 6z" fill="#078a1c"/></svg>
<div class="t" style="left:31px;top:511.74px;font-size:13.3px;color:#000;-webkit-text-stroke:0.12px #000;letter-spacing:0px">Spire42</div>
<div class="t" style="left:122px;top:511.74px;font-size:13.3px;color:#000;-webkit-text-stroke:0.12px #000"><span class="n2">10617835</span></div>
<div class="t" style="left:675px;top:511.74px;font-size:13.3px;color:#000;-webkit-text-stroke:0.12px #000">1<span style="padding:0 0.4px">/</span>15<span style="padding:0 0.4px">/</span>2021</div>
<div class="t" style="left:738.5px;top:511.74px;font-size:13.3px;color:#000;-webkit-text-stroke:0.12px #000"><span class="m">12:02:10 AM</span></div>
<svg style="left:120px;top:508px" width="6" height="6" viewBox="0 0 6 6"><path d="M0 0h6L0 6z" fill="#078a1c"/></svg>
<div class="t" style="left:31px;top:531.74px;font-size:13.3px;color:#000;-webkit-text-stroke:0.12px #000;letter-spacing:0px">Spire42</div>
<div class="t" style="left:122px;top:531.74px;font-size:13.3px;color:#000;-webkit-text-stroke:0.12px #000"><span class="n2">10617835</span></div>
<div class="t" style="left:675px;top:531.74px;font-size:13.3px;color:#000;-webkit-text-stroke:0.12px #000">1<span style="padding:0 0.4px">/</span>15<span style="padding:0 0.4px">/</span>2021</div>
<div class="t" style="left:738.5px;top:531.74px;font-size:13.3px;color:#000;-webkit-text-stroke:0.12px #000"><span class="m">3:32:04 AM</span></div>
<svg style="left:120px;top:528px" width="6" height="6" viewBox="0 0 6 6"><path d="M0 0h6L0 6z" fill="#078a1c"/></svg>
<div class="t" style="left:31px;top:551.74px;font-size:13.3px;color:#000;-webkit-text-stroke:0.12px #000;letter-spacing:0px">Spire42</div>
<div class="t" style="left:122px;top:551.74px;font-size:13.3px;color:#000;-webkit-text-stroke:0.12px #000"><span class="n2">10617835</span></div>
<div class="t" style="left:675px;top:551.74px;font-size:13.3px;color:#000;-webkit-text-stroke:0.12px #000">1<span style="padding:0 0.4px">/</span>15<span style="padding:0 0.4px">/</span>2021</div>
<div class="t" style="left:738.5px;top:551.74px;font-size:13.3px;color:#000;-webkit-text-stroke:0.12px #000"><span class="m">3:32:19 AM</span></div>
<svg style="left:120px;top:548px" width="6" height="6" viewBox="0 0 6 6"><path d="M0 0h6L0 6z" fill="#078a1c"/></svg>
<div class="t" style="left:31px;top:571.74px;font-size:13.3px;color:#000;-webkit-text-stroke:0.12px #000;letter-spacing:0px">Spire42</div>
<div class="t" style="left:122px;top:571.74px;font-size:13.3px;color:#000;-webkit-text-stroke:0.12px #000"><span class="n2">10617835</span></div>
<div class="t" style="left:675px;top:571.74px;font-size:13.3px;color:#000;-webkit-text-stroke:0.12px #000">1<span style="padding:0 0.4px">/</span>15<span style="padding:0 0.4px">/</span>2021</div>
<div class="t" style="left:738.5px;top:571.74px;font-size:13.3px;color:#000;-webkit-text-stroke:0.12px #000"><span class="m">4:09:36 PM</span></div>
<svg style="left:120px;top:568px" width="6" height="6" viewBox="0 0 6 6"><path d="M0 0h6L0 6z" fill="#078a1c"/></svg>
<div class="t" style="left:31px;top:591.74px;font-size:13.3px;color:#000;-webkit-text-stroke:0.12px #000;letter-spacing:0px">Spire42</div>
<div class="t" style="left:122px;top:591.74px;font-size:13.3px;color:#000;-webkit-text-stroke:0.12px #000"><span class="n2">10617835</span></div>
<div class="t" style="left:675px;top:591.74px;font-size:13.3px;color:#000;-webkit-text-stroke:0.12px #000">1<span style="padding:0 0.4px">/</span>15<span style="padding:0 0.4px">/</span>2021</div>
<div class="t" style="left:738.5px;top:591.74px;font-size:13.3px;color:#000;-webkit-text-stroke:0.12px #000"><span class="m">4:37:08 PM</span></div>
<svg style="left:120px;top:588px" width="6" height="6" viewBox="0 0 6 6"><path d="M0 0h6L0 6z" fill="#078a1c"/></svg>
<div class="t" style="left:31px;top:631.74px;font-size:13.3px;color:#000;-webkit-text-stroke:0.12px #000;letter-spacing:0px">Spire41</div>
<div class="t" style="left:122px;top:631.74px;font-size:13.3px;color:#000;-webkit-text-stroke:0.12px #000"><span class="n2">70038922</span></div>
<div class="t" style="left:675px;top:631.74px;font-size:13.3px;color:#000;-webkit-text-stroke:0.12px #000">1<span style="padding:0 0.4px">/</span>15<span style="padding:0 0.4px">/</span>2021</div>
<div class="t" style="left:738.5px;top:631.74px;font-size:13.3px;color:#000;-webkit-text-stroke:0.12px #000"><span class="m">3:32:11 AM</span></div>
<svg style="left:120px;top:628px" width="6" height="6" viewBox="0 0 6 6"><path d="M0 0h6L0 6z" fill="#078a1c"/></svg>
<div class="t" style="left:675px;top:671.74px;font-size:13.3px;color:#000;-webkit-text-stroke:0.12px #000">1<span style="padding:0 0.4px">/</span>14<span style="padding:0 0.4px">/</span>2021</div>
<div class="t" style="left:738.5px;top:671.74px;font-size:13.3px;color:#000;-webkit-text-stroke:0.12px #000"><span class="m">11:27:12 PM</span></div>
<div class="t" style="left:31px;top:711.74px;font-size:13.3px;color:#000;-webkit-text-stroke:0.12px #000;letter-spacing:0px">Spire41</div>
<div class="t" style="left:122px;top:711.74px;font-size:13.3px;color:#000;-webkit-text-stroke:0.12px #000"><span class="n2">70040956</span></div>
<div class="t" style="left:213px;top:711.74px;font-size:13.3px;color:#000;-webkit-text-stroke:0.12px #000"><span class="n">SUBWAY</span></div>
<div class="t" style="left:325px;top:711.74px;font-size:13.3px;color:#000;-webkit-text-stroke:0.12px #000"><span class="n">TERMINAL 3 , MISSISSAUGA, ON L5P1B2</span></div>
<div class="t" style="left:675px;top:711.74px;font-size:13.3px;color:#000;-webkit-text-stroke:0.12px #000">1<span style="padding:0 0.4px">/</span>15<span style="padding:0 0.4px">/</span>2021</div>
<div class="t" style="left:738.5px;top:711.74px;font-size:13.3px;color:#000;-webkit-text-stroke:0.12px #000"><span class="m">2:19:03 PM</span></div>
<svg style="left:120px;top:708px" width="6" height="6" viewBox="0 0 6 6"><path d="M0 0h6L0 6z" fill="#078a1c"/></svg>
<div class="t" style="left:31px;top:731.74px;font-size:13.3px;color:#000;-webkit-text-stroke:0.12px #000;letter-spacing:0px">Spire41</div>
<div class="t" style="left:122px;top:731.74px;font-size:13.3px;color:#000;-webkit-text-stroke:0.12px #000"><span class="n2">70040956</span></div>
<div class="t" style="left:213px;top:731.74px;font-size:13.3px;color:#000;-webkit-text-stroke:0.12px #000"><span class="n">SUBWAY</span></div>
<div class="t" style="left:325px;top:731.74px;font-size:13.3px;color:#000;-webkit-text-stroke:0.12px #000"><span class="n">TERMINAL 3 , MISSISSAUGA, ON L5P1B2</span></div>
<div class="t" style="left:675px;top:731.74px;font-size:13.3px;color:#000;-webkit-text-stroke:0.12px #000">1<span style="padding:0 0.4px">/</span>15<span style="padding:0 0.4px">/</span>2021</div>
<div class="t" style="left:738.5px;top:731.74px;font-size:13.3px;color:#000;-webkit-text-stroke:0.12px #000"><span class="m">2:23:05 PM</span></div>
<svg style="left:120px;top:728px" width="6" height="6" viewBox="0 0 6 6"><path d="M0 0h6L0 6z" fill="#078a1c"/></svg>
<div class="t" style="left:31px;top:751.74px;font-size:13.3px;color:#000;-webkit-text-stroke:0.12px #000;letter-spacing:0px">Spire41</div>
<div class="t" style="left:122px;top:751.74px;font-size:13.3px;color:#000;-webkit-text-stroke:0.12px #000"><span class="n2">70040956</span></div>
<div class="t" style="left:213px;top:751.74px;font-size:13.3px;color:#000;-webkit-text-stroke:0.12px #000"><span class="n">SUBWAY</span></div>
<div class="t" style="left:325px;top:751.74px;font-size:13.3px;color:#000;-webkit-text-stroke:0.12px #000"><span class="n">TERMINAL 3 , MISSISSAUGA, ON L5P1B2</span></div>
<div class="t" style="left:675px;top:751.74px;font-size:13.3px;color:#000;-webkit-text-stroke:0.12px #000">1<span style="padding:0 0.4px">/</span>15<span style="padding:0 0.4px">/</span>2021</div>
<div class="t" style="left:738.5px;top:751.74px;font-size:13.3px;color:#000;-webkit-text-stroke:0.12px #000"><span class="m">2:34:12 PM</span></div>
<svg style="left:120px;top:748px" width="6" height="6" viewBox="0 0 6 6"><path d="M0 0h6L0 6z" fill="#078a1c"/></svg>
<div class="t" style="left:31px;top:771.74px;font-size:13.3px;color:#000;-webkit-text-stroke:0.12px #000;letter-spacing:0px">Spire41</div>
<div class="t" style="left:122px;top:771.74px;font-size:13.3px;color:#000;-webkit-text-stroke:0.12px #000"><span class="n2">70040956</span></div>
<div class="t" style="left:213px;top:771.74px;font-size:13.3px;color:#000;-webkit-text-stroke:0.12px #000"><span class="n">SUBWAY</span></div>
<div class="t" style="left:325px;top:771.74px;font-size:13.3px;color:#000;-webkit-text-stroke:0.12px #000"><span class="n">TERMINAL 3 , MISSISSAUGA, ON L5P1B2</span></div>
<div class="t" style="left:675px;top:771.74px;font-size:13.3px;color:#000;-webkit-text-stroke:0.12px #000">1<span style="padding:0 0.4px">/</span>15<span style="padding:0 0.4px">/</span>2021</div>
<div class="t" style="left:738.5px;top:771.74px;font-size:13.3px;color:#000;-webkit-text-stroke:0.12px #000"><span class="m">2:43:05 PM</span></div>
<svg style="left:120px;top:768px" width="6" height="6" viewBox="0 0 6 6"><path d="M0 0h6L0 6z" fill="#078a1c"/></svg>
<div class="t" style="left:31px;top:791.74px;font-size:13.3px;color:#000;-webkit-text-stroke:0.12px #000;letter-spacing:0px">Spire41</div>
<div class="t" style="left:122px;top:791.74px;font-size:13.3px;color:#000;-webkit-text-stroke:0.12px #000"><span class="n2">70040956</span></div>
<div class="t" style="left:213px;top:791.74px;font-size:13.3px;color:#000;-webkit-text-stroke:0.12px #000"><span class="n">SUBWAY</span></div>
<div class="t" style="left:325px;top:791.74px;font-size:13.3px;color:#000;-webkit-text-stroke:0.12px #000"><span class="n">TERMINAL 3 , MISSISSAUGA, ON L5P1B2</span></div>
<div class="t" style="left:675px;top:791.74px;font-size:13.3px;color:#000;-webkit-text-stroke:0.12px #000">1<span style="padding:0 0.4px">/</span>15<span style="padding:0 0.4px">/</span>2021</div>
<div class="t" style="left:738.5px;top:791.74px;font-size:13.3px;color:#000;-webkit-text-stroke:0.12px #000"><span class="m">2:54:34 PM</span></div>
<svg style="left:120px;top:788px" width="6" height="6" viewBox="0 0 6 6"><path d="M0 0h6L0 6z" fill="#078a1c"/></svg>
<div class="t" style="left:31px;top:811.74px;font-size:13.3px;color:#000;-webkit-text-stroke:0.12px #000;letter-spacing:0px">Spire41</div>
<div class="t" style="left:122px;top:811.74px;font-size:13.3px;color:#000;-webkit-text-stroke:0.12px #000"><span class="n2">70040956</span></div>
<div class="t" style="left:213px;top:811.74px;font-size:13.3px;color:#000;-webkit-text-stroke:0.12px #000"><span class="n">SUBWAY</span></div>
<div class="t" style="left:325px;top:811.74px;font-size:13.3px;color:#000;-webkit-text-stroke:0.12px #000"><span class="n">TERMINAL 3 , MISSISSAUGA, ON L5P1B2</span></div>
<div class="t" style="left:675px;top:811.74px;font-size:13.3px;color:#000;-webkit-text-stroke:0.12px #000">1<span style="padding:0 0.4px">/</span>15<span style="padding:0 0.4px">/</span>2021</div>
<div class="t" style="left:738.5px;top:811.74px;font-size:13.3px;color:#000;-webkit-text-stroke:0.12px #000"><span class="m">3:34:48 PM</span></div>
<svg style="left:120px;top:808px" width="6" height="6" viewBox="0 0 6 6"><path d="M0 0h6L0 6z" fill="#078a1c"/></svg>
<div class="t" style="left:31px;top:831.74px;font-size:13.3px;color:#000;-webkit-text-stroke:0.12px #000;letter-spacing:0px">Spire41</div>
<div class="t" style="left:122px;top:831.74px;font-size:13.3px;color:#000;-webkit-text-stroke:0.12px #000"><span class="n2">70040956</span></div>
<div class="t" style="left:213px;top:831.74px;font-size:13.3px;color:#000;-webkit-text-stroke:0.12px #000"><span class="n">SUBWAY</span></div>
<div class="t" style="left:325px;top:831.74px;font-size:13.3px;color:#000;-webkit-text-stroke:0.12px #000"><span class="n">TERMINAL 3 , MISSISSAUGA, ON L5P1B2</span></div>
<div class="t" style="left:675px;top:831.74px;font-size:13.3px;color:#000;-webkit-text-stroke:0.12px #000">1<span style="padding:0 0.4px">/</span>15<span style="padding:0 0.4px">/</span>2021</div>
<div class="t" style="left:738.5px;top:831.74px;font-size:13.3px;color:#000;-webkit-text-stroke:0.12px #000"><span class="m">3:40:28 PM</span></div>
<svg style="left:120px;top:828px" width="6" height="6" viewBox="0 0 6 6"><path d="M0 0h6L0 6z" fill="#078a1c"/></svg>
<div class="t" style="left:31px;top:871.74px;font-size:13.3px;color:#000;-webkit-text-stroke:0.12px #000;letter-spacing:0px">Spire41</div>
<div class="t" style="left:122px;top:871.74px;font-size:13.3px;color:#000;-webkit-text-stroke:0.12px #000"><span class="n2">70038921</span></div>
<div class="t" style="left:675px;top:871.74px;font-size:13.3px;color:#000;-webkit-text-stroke:0.12px #000">1<span style="padding:0 0.4px">/</span>15<span style="padding:0 0.4px">/</span>2021</div>
<div class="t" style="left:738.5px;top:871.74px;font-size:13.3px;color:#000;-webkit-text-stroke:0.12px #000"><span class="m">3:32:16 AM</span></div>
<svg style="left:120px;top:868px" width="6" height="6" viewBox="0 0 6 6"><path d="M0 0h6L0 6z" fill="#078a1c"/></svg>
<div class="t" style="left:31px;top:891.74px;font-size:13.3px;color:#000;-webkit-text-stroke:0.12px #000;letter-spacing:0px">Spire41</div>
<div class="t" style="left:122px;top:891.74px;font-size:13.3px;color:#000;-webkit-text-stroke:0.12px #000"><span class="n2">70038921</span></div>
<div class="t" style="left:675px;top:891.74px;font-size:13.3px;color:#000;-webkit-text-stroke:0.12px #000">1<span style="padding:0 0.4px">/</span>15<span style="padding:0 0.4px">/</span>2021</div>
<div class="t" style="left:738.5px;top:891.74px;font-size:13.3px;color:#000;-webkit-text-stroke:0.12px #000"><span class="m">3:56:07 PM</span></div>
<svg style="left:120px;top:888px" width="6" height="6" viewBox="0 0 6 6"><path d="M0 0h6L0 6z" fill="#078a1c"/></svg>
<svg style="left:120px;top:928px" width="6" height="2" viewBox="0 0 6 2"><path d="M0 0h6v2H0z" fill="#078a1c"/></svg>
<div style="left:3px;top:930px;width:786px;height:29px;background:#e6e6e6"></div>
<div style="left:3px;top:930px;width:786px;height:1px;background:#9e9e9e"></div>
<div style="left:3px;top:958px;width:786px;height:1px;background:#c8c6c4"></div>
<div style="left:3px;top:959px;width:786px;height:14px;background:#f3f2f1"></div>
<svg style="left:30px;top:940px" width="5" height="8" viewBox="0 0 5 8"><path d="M5 0v8L0 4z" fill="#bdbdbd"/></svg>
<svg style="left:58px;top:940px" width="5" height="8" viewBox="0 0 5 8"><path d="M0 0v8l5-4z" fill="#bdbdbd"/></svg>
<div style="left:103px;top:930px;width:65px;height:25px;background:#fff;border-left:1px solid #9e9e9e;border-right:1px solid #9e9e9e;box-sizing:border-box"></div>
<div style="left:103px;top:953px;width:65px;height:2px;background:#217346"></div>
<div class="t" style="left:115.4px;top:937.76px;font-size:12.1px;color:#217346;font-weight:bold">Sheet1</div>
<svg style="left:200px;top:935px" width="18" height="18" viewBox="0 0 18 18"><circle cx="9" cy="9" r="7.6" fill="none" stroke="#666" stroke-width="1.2"/><path d="M9 4.5v9M4.5 9h9" stroke="#666" stroke-width="1.5"/></svg>
<div style="left:667px;top:938.5px;width:2px;height:2px;background:#a0a0a0"></div>
<div style="left:667px;top:943px;width:2px;height:2px;background:#a0a0a0"></div>
<div style="left:667px;top:947.5px;width:2px;height:2px;background:#a0a0a0"></div>
<div style="left:684px;top:937px;width:106px;height:15px;background:#fff;border:1px solid #b8b8b8;box-sizing:border-box"></div>
<div style="left:698px;top:937px;width:2px;height:15px;background:#b8b8b8"></div>
<svg style="left:689px;top:941px" width="4" height="7" viewBox="0 0 4 7"><path d="M4 0v7L0 3.5z" fill="#555"/></svg>
</body></html>
